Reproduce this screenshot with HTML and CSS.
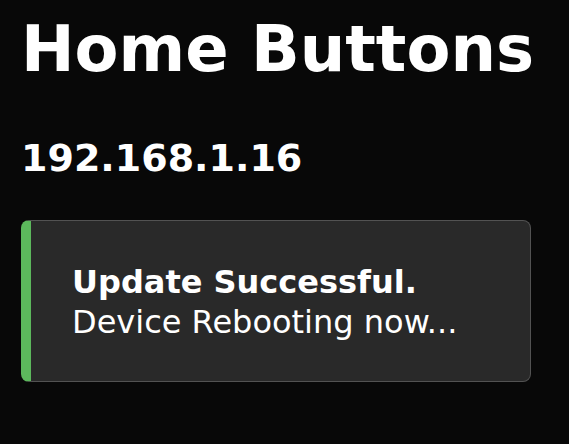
FILE: index.html
```html
<!DOCTYPE html>
<html>
<head>
<meta charset="utf-8">
<link rel="stylesheet" href="styles.css">
</head>
<body>
<main class="page">
  <h1 class="title">Home Buttons</h1>
  <h2 class="ip">192.168.1.16</h2>
  <div class="alert">
    <strong class="alert-title">Update Successful.</strong>
    <span class="alert-text">Device Rebooting now...</span>
  </div>
</main>
</body>
</html>
```
FILE: styles.css
```css
html, body {
  margin: 0;
  padding: 0;
  background: #080808;
}
body {
  font-family: "DejaVu Sans", Verdana, sans-serif;
  color: #ffffff;
}
.page {
  display: flex;
  flex-direction: column;
  padding: 11px 0 0 21px;
}
.title {
  margin: 0;
  font-size: 64px;
  line-height: 1.2;
  font-weight: bold;
}
.ip {
  margin: 48px 0 0 0;
  font-size: 38px;
  line-height: 1.2;
  font-weight: bold;
}
.alert {
  margin-top: 39px;
  width: 510px;
  box-sizing: border-box;
  display: flex;
  flex-direction: column;
  background: #292929;
  border: 1px solid #525252;
  border-left: 10px solid #5cb85c;
  border-radius: 8px;
  padding: 41px 20px 39px 41px;
  font-size: 32px;
  line-height: 40px;
}
.alert-title {
  font-weight: bold;
}
```
